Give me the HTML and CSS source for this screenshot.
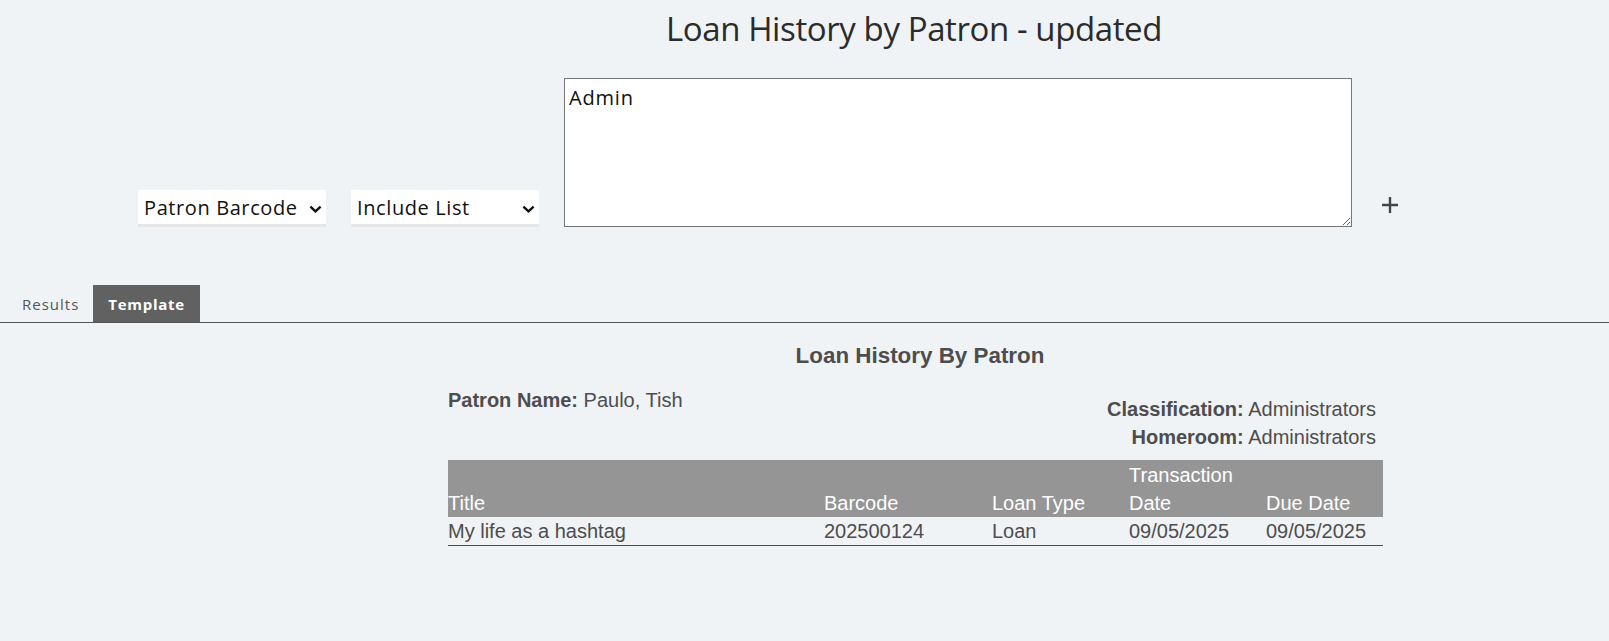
FILE: index.html
```html
<!DOCTYPE html>
<html lang="en">
<head>
    <meta charset="utf-8">
    <title>Loan History by Patron - updated</title>
    <link rel="stylesheet" href="styles.css">
</head>
<body>
<div class="header">
    <h1 class="page-title">Loan History by Patron - updated</h1>
</div>

<div class="filters">
    <div class="select-wrap">
        <select class="filter-select">
            <option>Patron Barcode</option>
        </select>
        <svg class="chevron" viewBox="0 0 14 8"><path d="M1.5 1.5 L7 6.5 L12.5 1.5" /></svg>
    </div>
    <div class="select-wrap">
        <select class="filter-select">
            <option>Include List</option>
        </select>
        <svg class="chevron" viewBox="0 0 14 8"><path d="M1.5 1.5 L7 6.5 L12.5 1.5" /></svg>
    </div>
    <textarea class="filter-values">Admin</textarea>
    <a href="#" class="add-filter">
        <svg viewBox="0 0 16 16"><path d="M8 0 V16 M0 8 H16" /></svg>
    </a>
</div>

<div class="tabs">
    <a href="#" class="tab">Results</a>
    <a href="#" class="tab active">Template</a>
</div>

<div class="report">
    <div class="report-title">Loan History By Patron</div>
    <div class="patron-info">
        <div class="patron-name"><b>Patron Name:</b> Paulo, Tish</div>
        <div class="patron-meta">
            <div><b>Classification:</b> Administrators</div>
            <div><b>Homeroom:</b> Administrators</div>
        </div>
    </div>
    <table class="loans">
        <colgroup>
            <col class="c-title">
            <col class="c-barcode">
            <col class="c-type">
            <col class="c-date">
            <col class="c-due">
        </colgroup>
        <thead>
        <tr>
            <th>Title</th>
            <th>Barcode</th>
            <th>Loan Type</th>
            <th>Transaction Date</th>
            <th>Due Date</th>
        </tr>
        </thead>
        <tbody>
        <tr>
            <td>My life as a hashtag</td>
            <td>202500124</td>
            <td>Loan</td>
            <td>09/05/2025</td>
            <td>09/05/2025</td>
        </tr>
        </tbody>
    </table>
</div>
</body>
</html>
```

FILE: styles.css
```css
body {
    margin: 0;
    background-color: #f0f3f6;
    font-family: "Open Sans", "DejaVu Sans", sans-serif;
    color: #2b2b2b;
}

.header {
    padding-left: 219px;
    text-align: center;
}

.page-title {
    margin: 0;
    padding-top: 5px;
    font-size: 33px;
    font-weight: 400;
    line-height: 48px;
    letter-spacing: -0.4px;
}

.filters {
    display: flex;
    align-items: flex-end;
    padding-left: 138px;
    margin-top: 25px;
}

.select-wrap {
    position: relative;
    width: 188px;
    margin-right: 25px;
}

.filter-select {
    appearance: none;
    -webkit-appearance: none;
    display: block;
    width: 100%;
    height: 37px;
    padding: 0 0 0 6px;
    border: none;
    border-bottom: 3px solid #e6e6e6;
    border-radius: 0;
    background-color: #fff;
    font-family: "Open Sans", "DejaVu Sans", sans-serif;
    font-size: 20px;
    letter-spacing: 0.6px;
    color: #111;
    outline: none;
}

.chevron {
    position: absolute;
    right: 4px;
    top: 15px;
    width: 13px;
    height: 8px;
    fill: none;
    stroke: #111;
    stroke-width: 2.6;
    pointer-events: none;
}

.filter-values {
    width: 788px;
    height: 149px;
    box-sizing: border-box;
    margin: 0;
    padding: 5px 4px 2px;
    font-family: "Open Sans", "DejaVu Sans", sans-serif;
    font-size: 20px;
    letter-spacing: 0.8px;
    color: #111;
    background-color: #fff;
}

.add-filter {
    margin-left: 30px;
    margin-bottom: 14px;
    width: 16px;
    height: 16px;
}

.add-filter svg {
    display: block;
    width: 16px;
    height: 16px;
    stroke: #444;
    stroke-width: 2.4;
}

.tabs {
    display: flex;
    margin-top: 58px;
    padding-left: 8px;
    border-bottom: 1px solid #555;
}

.tab {
    display: block;
    padding: 0 14px;
    height: 37px;
    line-height: 38px;
    font-size: 15px;
    letter-spacing: 1px;
    color: #555;
    text-decoration: none;
}

.tab.active {
    padding: 0 15px;
    background-color: #616161;
    color: #fff;
    font-weight: 700;
    letter-spacing: 0.7px;
}

.report {
    margin-left: 448px;
    width: 935px;
    font-family: "Liberation Sans", Arial, sans-serif;
    font-size: 20px;
    line-height: 28px;
    color: #4d4d4d;
}

.report-title {
    margin-top: 19px;
    padding-left: 9px;
    text-align: center;
    font-size: 22.4px;
    font-weight: 700;
}

.patron-info {
    display: flex;
    justify-content: space-between;
    margin-top: 16px;
}

.patron-meta {
    margin-top: 9px;
    padding-right: 7px;
    text-align: right;
}

.loans {
    width: 935px;
    margin-top: 9px;
    border-collapse: collapse;
    table-layout: fixed;
}

.c-title { width: 376px; }
.c-barcode { width: 168px; }
.c-type { width: 137px; }
.c-date { width: 137px; }
.c-due { width: 117px; }

.loans th {
    padding: 1px 0 0 0;
    background-color: #959595;
    color: #fff;
    font-weight: 400;
    text-align: left;
    vertical-align: bottom;
}

.loans td {
    padding: 0;
    border-bottom: 1px solid #4d4d4d;
    text-align: left;
}
```
